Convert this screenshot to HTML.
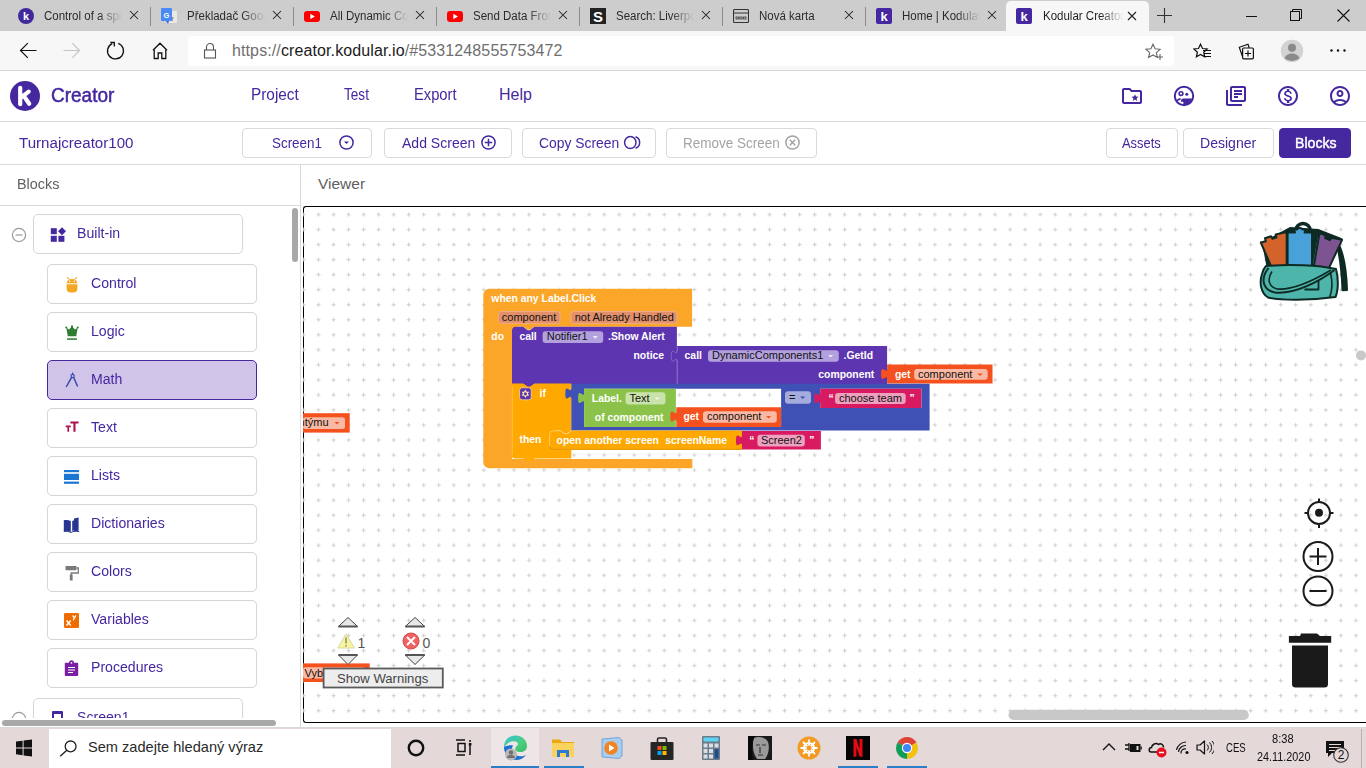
<!DOCTYPE html>
<html><head><meta charset="utf-8">
<style>
*{box-sizing:border-box;margin:0;padding:0}
html,body{width:1366px;height:768px;overflow:hidden;background:#fff;font-family:"Liberation Sans",sans-serif;position:relative}
.a{position:absolute}
#tabs{left:0;top:0;width:1366px;height:31px;background:#cdcdcd}
.tab{position:absolute;top:0;height:31px;width:143px}
.tab .sep{position:absolute;left:0;top:7px;width:1px;height:19px;background:#8c8c8c}
.tab .ic{position:absolute;left:11px;top:8px;width:16px;height:16px}
.tab .tx{position:absolute;left:37px;top:8px;width:78px;overflow:hidden;white-space:nowrap;font-size:12.5px;color:#2b2b2b;line-height:16px;
 -webkit-mask-image:linear-gradient(90deg,#000 70%,transparent 100%)}
.tab .tx span{display:inline-block;transform:scaleX(.92);transform-origin:0 0}
.tab .cl{position:absolute;left:121px;top:9px;width:12px;height:12px}
#active{left:1006px;top:1px;width:143px;height:31px;background:#f7f7f7;border-radius:5px 5px 0 0}
#addr{left:0;top:31px;width:1366px;height:40px;background:#f7f7f7;border-bottom:1px solid #d6d6d6}
#url{left:188px;top:36px;width:986px;height:30px;background:#fff;border-radius:4px}
#urltext{left:232px;top:42px;font-size:16px;letter-spacing:.11px;color:#6f6f6f;white-space:nowrap;line-height:18px}
#urltext b{font-weight:normal;color:#1b1b1b}
#hdr{left:0;top:71px;width:1366px;height:51px;background:#fff;border-bottom:1px solid #d9d9d9}
.purple{color:#4527a0}
#bar{left:0;top:122px;width:1366px;height:43px;border-bottom:1px solid #d9d9d9}
.btn{position:absolute;top:128px;height:30px;border:1px solid #dadada;border-radius:4px;background:#fff;color:#4527a0;font-size:15px;line-height:28px;white-space:nowrap}
.tb{top:134px;transform-origin:0 0;font-size:15px;line-height:17px;color:#4527a0;white-space:nowrap}
.ct{font-size:15.5px;line-height:18px;color:#4527a0;white-space:nowrap;transform:scaleX(.91);transform-origin:0 0}
.bw{font:bold 10.4px "Liberation Sans",sans-serif;fill:#fff}
.dk{font:11px "Liberation Sans",sans-serif;fill:#111}
.cat{position:absolute;left:47px;width:210px;height:40px;border:1px solid #d6d6d6;border-radius:4px;background:#fff;font-size:15px;color:#4527a0;line-height:38px}
.cat span{position:absolute;left:43px;top:0}
.cat svg{position:absolute;left:16px;top:12px}
</style></head><body>
<!-- TAB STRIP -->
<div id="tabs" class="a"></div>
<div class="tab" style="left:7px"><svg class="ic" viewBox="0 0 16 16"><circle cx="8" cy="8" r="8" fill="#3f2a9c"/><text x="8" y="12.2" font-size="11" font-weight="bold" fill="#fff" text-anchor="middle" font-family="Liberation Sans">k</text></svg><div class="tx"><span>Control of a spinner</span></div><svg class="cl" viewBox="0 0 12 12"><path d="M2 2l8 8M10 2l-8 8" stroke="#222" stroke-width="1.05"/></svg></div>
<div class="tab" style="left:150px"><div class="sep"></div><svg class="ic" viewBox="0 0 16 16"><rect x="5" y="3" width="11" height="12" rx="1" fill="#e8e8e8"/><path d="M10 7l1 2.2 2.3.2-1.7 1.5.5 2.3-2.1-1.2-2 1.2.5-2.3-1.8-1.5 2.3-.2z" fill="#8a8a8a"/><rect x="0" y="0" width="11" height="13" rx="1" fill="#4a8af4"/><path d="M5 13l2 3 1-3z" fill="#3367d6"/><text x="5.5" y="9.5" font-size="7.5" font-weight="bold" fill="#fff" text-anchor="middle" font-family="Liberation Sans">G</text></svg><div class="tx"><span>Překladač Google</span></div><svg class="cl" viewBox="0 0 12 12"><path d="M2 2l8 8M10 2l-8 8" stroke="#222" stroke-width="1.05"/></svg></div>
<div class="tab" style="left:293px"><div class="sep"></div><svg class="ic" viewBox="0 0 16 16"><rect x="0" y="3" width="16" height="11" rx="3" fill="#f00"/><path d="M6.3 5.8v5.4l4.6-2.7z" fill="#fff"/></svg><div class="tx"><span>All Dynamic Components</span></div><svg class="cl" viewBox="0 0 12 12"><path d="M2 2l8 8M10 2l-8 8" stroke="#222" stroke-width="1.05"/></svg></div>
<div class="tab" style="left:436px"><div class="sep"></div><svg class="ic" viewBox="0 0 16 16"><rect x="0" y="3" width="16" height="11" rx="3" fill="#f00"/><path d="M6.3 5.8v5.4l4.6-2.7z" fill="#fff"/></svg><div class="tx"><span>Send Data From</span></div><svg class="cl" viewBox="0 0 12 12"><path d="M2 2l8 8M10 2l-8 8" stroke="#222" stroke-width="1.05"/></svg></div>
<div class="tab" style="left:579px"><div class="sep"></div><svg class="ic" viewBox="0 0 16 16"><rect width="16" height="16" fill="#222"/><text x="8" y="14" font-size="15" font-weight="bold" fill="#fff" text-anchor="middle" font-family="Liberation Sans">S</text></svg><div class="tx"><span>Search: Liverpool</span></div><svg class="cl" viewBox="0 0 12 12"><path d="M2 2l8 8M10 2l-8 8" stroke="#222" stroke-width="1.05"/></svg></div>
<div class="tab" style="left:722px"><div class="sep"></div><svg class="ic" viewBox="0 0 16 16"><rect x="0.5" y="1.5" width="15" height="13" rx="1" fill="none" stroke="#333" stroke-width="1.1"/><line x1="0.5" y1="5" x2="15.5" y2="5" stroke="#333" stroke-width="1"/><rect x="3" y="9" width="2.4" height="2" fill="none" stroke="#333" stroke-width=".8"/><rect x="6.8" y="9" width="2.4" height="2" fill="none" stroke="#333" stroke-width=".8"/><rect x="10.6" y="9" width="2.4" height="2" fill="none" stroke="#333" stroke-width=".8"/></svg><div class="tx" style="-webkit-mask-image:none"><span>Nová karta</span></div><svg class="cl" viewBox="0 0 12 12"><path d="M2 2l8 8M10 2l-8 8" stroke="#222" stroke-width="1.05"/></svg></div>
<div class="tab" style="left:865px"><div class="sep"></div><svg class="ic" viewBox="0 0 16 16"><rect width="16" height="16" rx="2" fill="#4527a0"/><text x="8" y="13" font-size="13" font-weight="bold" fill="#fff" text-anchor="middle" font-family="Liberation Sans">k</text></svg><div class="tx"><span>Home | Kodular</span></div><svg class="cl" viewBox="0 0 12 12"><path d="M2 2l8 8M10 2l-8 8" stroke="#222" stroke-width="1.05"/></svg></div>
<div id="active" class="a"><svg style="position:absolute;left:10px;top:7px" width="16" height="16" viewBox="0 0 16 16"><rect width="16" height="16" rx="2" fill="#4527a0"/><text x="8" y="13" font-size="13" font-weight="bold" fill="#fff" text-anchor="middle" font-family="Liberation Sans">k</text></svg><div style="position:absolute;left:37px;top:7px;width:80px;overflow:hidden;white-space:nowrap;font-size:12.5px;color:#1e1e1e;line-height:16px;-webkit-mask-image:linear-gradient(90deg,#000 72%,transparent 100%)"><span style="display:inline-block;transform:scaleX(.92);transform-origin:0 0">Kodular Creator</span></div><svg style="position:absolute;left:120px;top:9px" width="12" height="12" viewBox="0 0 12 12"><path d="M2 2l8 8M10 2l-8 8" stroke="#222" stroke-width="1.1"/></svg></div>
<svg class="a" style="left:1157px;top:8px" width="15" height="15" viewBox="0 0 15 15"><path d="M7.5 0v15M0 7.5h15" stroke="#333" stroke-width="1.1"/></svg>
<svg class="a" style="left:1246px;top:10px" width="12" height="12" viewBox="0 0 12 12"><path d="M0 6.5h11" stroke="#111" stroke-width="1"/></svg>
<svg class="a" style="left:1290px;top:9px" width="13" height="13" viewBox="0 0 13 13"><rect x="0.5" y="2.5" width="9" height="9" fill="none" stroke="#111" stroke-width="1"/><path d="M2.5 2.5v-2h9v9h-2" fill="none" stroke="#111" stroke-width="1"/></svg>
<svg class="a" style="left:1337px;top:9px" width="13" height="13" viewBox="0 0 13 13"><path d="M0.5 0.5l12 12M12.5 0.5l-12 12" stroke="#111" stroke-width="1.1"/></svg>
<!-- ADDRESS BAR -->
<div id="addr" class="a"></div>
<div id="url" class="a"></div>
<svg class="a" style="left:19px;top:42px" width="18" height="17" viewBox="0 0 18 17"><path d="M1.5 8.5h16M8.8 1.2L1.5 8.5l7.3 7.3" fill="none" stroke="#111" stroke-width="1.2"/></svg>
<svg class="a" style="left:63px;top:42px" width="18" height="17" viewBox="0 0 18 17"><path d="M0.5 8.5h16M9.2 1.2l7.3 7.3-7.3 7.3" fill="none" stroke="#c4c4c4" stroke-width="1.2"/></svg>
<svg class="a" style="left:106px;top:41px" width="20" height="20" viewBox="0 0 20 20"><path d="M12.3 2.4A8 8 0 1 1 6.2 2.6" fill="none" stroke="#111" stroke-width="1.3"/><path d="M4.3 1.5h4v4" fill="none" stroke="#111" stroke-width="1.3"/></svg>
<svg class="a" style="left:152px;top:42px" width="16" height="18" viewBox="0 0 16 18"><path d="M1 8.2L8 1.2l7 7M2.2 7v9.5h4V11h3.6v5.5h4V7" fill="none" stroke="#111" stroke-width="1.3"/></svg>
<svg class="a" style="left:203px;top:42px" width="14" height="17" viewBox="0 0 14 17"><path d="M3.5 8V5a3.5 3.5 0 0 1 7 0v3" fill="none" stroke="#555" stroke-width="1.1"/><rect x="1.5" y="8" width="11" height="8" fill="none" stroke="#555" stroke-width="1.1"/></svg>
<svg class="a" style="left:1145px;top:43px" width="19" height="18" viewBox="0 0 19 18"><path d="M8 1.2l2.1 4.6 5 .5-3.8 3.3 1.1 4.9L8 12l-4.4 2.5 1.1-4.9L.9 6.3l5-.5z" fill="none" stroke="#666" stroke-width="1.1"/><path d="M15 11v6M12 14h6" stroke="#666" stroke-width="1.1"/></svg>
<svg class="a" style="left:1193px;top:43px" width="19" height="17" viewBox="0 0 19 17"><path d="M7.5 1.2l2 4.3 4.7.5-3.5 3.2 1 4.6-4.2-2.4-4.1 2.4 1-4.6L.9 6l4.6-.5z" fill="none" stroke="#111" stroke-width="1.2"/><path d="M10 7.5h8M11 10.5h7M11 13.5h7" stroke="#111" stroke-width="1.2"/></svg>
<svg class="a" style="left:1238px;top:43px" width="18" height="17" viewBox="0 0 18 17"><path d="M4.5 13.5L1.3 4.3l8.7-3 1.2 3.5" fill="none" stroke="#111" stroke-width="1.2"/><rect x="4.6" y="5" width="10.8" height="10.8" rx="1" fill="#f7f7f7" stroke="#111" stroke-width="1.2"/><path d="M10 7.5v6M7 10.5h6" stroke="#111" stroke-width="1.2"/></svg>
<svg class="a" style="left:1280px;top:39px" width="24" height="24" viewBox="0 0 24 24"><circle cx="12" cy="12" r="11.2" fill="#d2d2d2"/><circle cx="12" cy="8.8" r="4" fill="#8a8a8a"/><path d="M4.6 19.2c1.2-3 4-4.6 7.4-4.6s6.2 1.6 7.4 4.6A11 11 0 0 1 4.6 19.2z" fill="#8a8a8a"/></svg>
<svg class="a" style="left:1329px;top:48px" width="18" height="5" viewBox="0 0 18 5"><circle cx="2.5" cy="2.5" r="1.2" fill="#111"/><circle cx="9" cy="2.5" r="1.2" fill="#111"/><circle cx="15.5" cy="2.5" r="1.2" fill="#111"/></svg>
<div id="urltext" class="a">https://<b>creator.kodular.io</b>/#5331248555753472</div>

<!-- KODULAR HEADER -->
<div id="hdr" class="a"></div>
<svg class="a" style="left:10px;top:81px" width="30" height="30" viewBox="0 0 30 30"><circle cx="15" cy="15" r="15" fill="#4527a0"/><path d="M10.2 6.8v16.4M10.2 17.2l8.5-6.6M13.6 14.6l5.6 8.2" fill="none" stroke="#fff" stroke-width="4.2" stroke-linecap="round" stroke-linejoin="round"/></svg>
<div class="a purple" style="left:50.5px;top:84px;font-size:20px;font-weight:normal;-webkit-text-stroke:.5px #4527a0;line-height:22px;transform:scaleX(.95);transform-origin:0 0">Creator</div>
<div class="a purple" style="left:250.5px;top:86px;font-size:16px;line-height:18px;transform:scaleX(.96);transform-origin:0 0">Project</div>
<div class="a purple" style="left:344px;top:86px;font-size:16px;line-height:18px;transform:scaleX(.85);transform-origin:0 0">Test</div>
<div class="a purple" style="left:414px;top:86px;font-size:16px;line-height:18px;transform:scaleX(.92);transform-origin:0 0">Export</div>
<div class="a purple" style="left:499px;top:86px;font-size:16px;line-height:18px">Help</div>
<svg class="a" style="left:1120px;top:84px" width="24" height="24" viewBox="0 0 24 24"><path fill="#4527a0" d="M20 6h-8l-2-2H4c-1.1 0-2 .9-2 2v12c0 1.1.9 2 2 2h16c1.1 0 2-.9 2-2V8c0-1.1-.9-2-2-2zm0 12H4V6h5.2l2 2H20v10z"/><path fill="#4527a0" d="M15 10.2l1 2.3 2.5.2-1.9 1.7.6 2.5-2.2-1.3-2.2 1.3.6-2.5-1.9-1.7 2.5-.2z"/></svg>
<svg class="a" style="left:1172px;top:84px" width="24" height="24" viewBox="0 0 24 24"><circle cx="12" cy="12" r="9.2" fill="none" stroke="#4527a0" stroke-width="2"/><circle cx="9" cy="9.6" r="1.9" fill="none" stroke="#4527a0" stroke-width="1.6"/><circle cx="14.8" cy="10.2" r="1.5" fill="#4527a0"/><path fill="#4527a0" d="M11.5 14.5h8.5a9 9 0 0 1-7.5 6.7c-.8-.1-1.3-.6-1.3-1.3 0-.5.3-.8.3-1.3 0-.4-.5-.8-1-.8h-1.6a3 3 0 0 1 2.6-3.3z"/><path d="M5 16.5c1.2-.8 2.2-1.5 3.6-1.6" fill="none" stroke="#4527a0" stroke-width="1.6"/></svg>
<svg class="a" style="left:1224px;top:84px" width="24" height="24" viewBox="0 0 24 24"><path fill="#4527a0" d="M4 6H2v14c0 1.1.9 2 2 2h14v-2H4V6zm16-4H8c-1.1 0-2 .9-2 2v12c0 1.1.9 2 2 2h12c1.1 0 2-.9 2-2V4c0-1.1-.9-2-2-2zm0 14H8V4h12v12zM10 9h8v2h-8zm0 3h4v2h-4zm0-6h8v2h-8z"/></svg>
<svg class="a" style="left:1276px;top:84px" width="24" height="24" viewBox="0 0 24 24"><path fill="#4527a0" d="M12 2C6.48 2 2 6.48 2 12s4.48 10 10 10 10-4.48 10-10S17.52 2 12 2zm0 18c-4.41 0-8-3.59-8-8s3.59-8 8-8 8 3.59 8 8-3.59 8-8 8zm.31-8.86c-1.77-.45-2.34-.94-2.34-1.67 0-.84.79-1.43 2.1-1.430 1.38 0 1.9.66 1.94 1.64h1.71c-.05-1.34-.87-2.57-2.49-2.97V5H10.9v1.69c-1.51.32-2.72 1.3-2.72 2.81 0 1.79 1.490 2.69 3.66 3.21 1.95.46 2.34 1.15 2.34 1.87 0 .53-.39 1.39-2.1 1.39-1.6 0-2.23-.72-2.32-1.64H8.04c.1 1.71 1.36 2.66 2.86 2.97V19h2.34v-1.67c1.52-.29 2.72-1.16 2.73-2.77-.01-2.2-1.9-2.96-3.66-3.42z"/></svg>
<svg class="a" style="left:1328px;top:84px" width="24" height="24" viewBox="0 0 24 24"><path fill="#4527a0" d="M12 2C6.48 2 2 6.48 2 12s4.48 10 10 10 10-4.48 10-10S17.52 2 12 2zM7.35 18.5C8.660 17.56 10.26 17 12 17s3.34.56 4.65 1.5c-1.31.94-2.91 1.5-4.65 1.5s-3.34-.56-4.65-1.5zm10.79-1.38C16.45 15.8 14.32 15 12 15s-4.45.8-6.14 2.12C4.7 15.73 4 13.95 4 12c0-4.42 3.58-8 8-8s8 3.58 8 8c0 1.95-.7 3.73-1.86 5.12zM12 6c-1.93 0-3.5 1.57-3.5 3.5S10.07 13 12 13s3.5-1.57 3.5-3.5S13.93 6 12 6zm0 5c-.83 0-1.5-.67-1.5-1.5S11.17 8 12 8s1.5.67 1.5 1.5S12.83 11 12 11z"/></svg>

<!-- TOOLBAR -->
<div id="bar" class="a"></div>
<div class="a purple" style="left:19px;top:134px;font-size:15.5px;line-height:18px;transform:scaleX(.975);transform-origin:0 0">Turnajcreator100</div>
<div class="btn" style="left:242px;width:130px"></div>
<div class="btn" style="left:384px;width:128px"></div>
<div class="btn" style="left:522px;width:134px"></div>
<div class="btn" style="left:666px;width:151px"></div>
<div class="btn" style="left:1106px;width:72px"></div>
<div class="btn" style="left:1183px;width:91px"></div>
<div class="btn" style="left:1279px;width:72px;background:#4527a0;border-color:#4527a0"></div>
<div class="a tb" style="left:271.9px;transform:scaleX(0.894)">Screen1</div>
<svg class="a" style="left:338px;top:134px" width="17" height="17" viewBox="0 0 17 17"><circle cx="8.5" cy="8.5" r="6.6" fill="none" stroke="#4527a0" stroke-width="1.5"/><path d="M6 7.6l2.5 2.5 2.5-2.5z" fill="#4527a0"/></svg>
<div class="a tb" style="left:401.5px;transform:scaleX(0.935)">Add Screen</div>
<svg class="a" style="left:480px;top:134px" width="17" height="17" viewBox="0 0 17 17"><circle cx="8.5" cy="8.5" r="6.6" fill="none" stroke="#4527a0" stroke-width="1.5"/><path d="M8.5 4.8v7.4M4.8 8.5h7.4" stroke="#4527a0" stroke-width="1.5"/></svg>
<div class="a tb" style="left:539.3px;transform:scaleX(0.925)">Copy Screen</div>
<svg class="a" style="left:623px;top:134px" width="19" height="17" viewBox="0 0 19 17"><ellipse cx="7.3" cy="8.5" rx="5.7" ry="6" fill="none" stroke="#4527a0" stroke-width="1.5"/><path d="M12.5 2.8a6 6 0 0 1 0 11.4" fill="none" stroke="#4527a0" stroke-width="1.5"/></svg>
<div class="a tb" style="left:683.1px;color:#a3a3a3;transform:scaleX(0.899)">Remove Screen</div>
<svg class="a" style="left:784px;top:134px" width="17" height="17" viewBox="0 0 17 17"><circle cx="8.5" cy="8.5" r="6.6" fill="none" stroke="#a3a3a3" stroke-width="1.5"/><path d="M5.8 5.8l5.4 5.4M11.2 5.8l-5.4 5.4" stroke="#a3a3a3" stroke-width="1.5"/></svg>
<div class="a tb" style="left:1121.8px;transform:scaleX(0.862)">Assets</div>
<div class="a tb" style="left:1200.0px;transform:scaleX(0.937)">Designer</div>
<div class="a tb" style="left:1295.2px;color:#fff;-webkit-text-stroke:.45px #fff;transform:scaleX(0.94)">Blocks</div>

<!-- PANEL HEADINGS -->
<div class="a" style="left:0;top:205px;width:300px;height:1px;background:#d9d9d9"></div>
<div class="a" style="left:300px;top:165px;width:1px;height:563px;background:#d9d9d9"></div>
<div class="a" style="left:16.5px;top:175px;font-size:15.5px;color:#606060;line-height:18px;transform:scaleX(.93);transform-origin:0 0">Blocks</div>
<div class="a" style="left:318px;top:175px;font-size:15.5px;color:#606060;line-height:18px">Viewer</div>

<svg class="a" style="left:11px;top:227px" width="16" height="16" viewBox="0 0 16 16"><circle cx="8" cy="8" r="6.6" fill="none" stroke="#9a9a9a" stroke-width="1.2"/><path d="M4.6 8h6.8" stroke="#9a9a9a" stroke-width="1.2"/></svg>
<div class="a" style="left:33px;top:214px;width:210px;height:40px;border:1px solid #d6d6d6;border-radius:5px"></div>
<svg class="a" style="left:50px;top:227px" width="16" height="16" viewBox="0 0 16 16"><rect x=".8" y="1.2" width="6" height="6" fill="#4527a0"/><path d="M12 .3l4 4-4 4-4-4z" fill="#4527a0"/><rect x=".8" y="8.8" width="6" height="6" fill="#4527a0"/><rect x="8.4" y="8.8" width="6" height="6" fill="#4527a0"/></svg>
<div class="a ct" style="left:77px;top:224px">Built-in</div>
<div class="a" style="left:47px;top:264px;width:210px;height:40px;border:1px solid #d6d6d6;border-radius:5px"></div>
<svg class="a" style="left:64px;top:276px" width="16" height="17" viewBox="0 0 16 17"><path d="M3.2 1.2l2 2.3M12.8 1.2l-2 2.3" stroke="#f5a623" stroke-width="1.1"/><path d="M2.6 7.2a5.4 4.2 0 0 1 10.8 0z" fill="#f5a623"/><path d="M2.6 8.3h10.8v4.2a4 4 0 0 1-4 4h-2.8a4 4 0 0 1-4-4z" fill="#f5a623"/><circle cx="5.6" cy="5.2" r=".8" fill="#fff"/><circle cx="10.4" cy="5.2" r=".8" fill="#fff"/></svg>
<div class="a ct" style="left:91px;top:274px">Control</div>
<div class="a" style="left:47px;top:312px;width:210px;height:40px;border:1px solid #d6d6d6;border-radius:5px"></div>
<svg class="a" style="left:64px;top:325px" width="16" height="16" viewBox="0 0 16 16"><path d="M2.3,2.6 L5,4.6 8,1.2 11,4.6 13.7,2.6 12.2,11.2 H3.8 Z" fill="#2e7d32"/><circle cx="2.3" cy="2.4" r="1" fill="#2e7d32"/><circle cx="8" cy="1.2" r="1" fill="#2e7d32"/><circle cx="13.7" cy="2.4" r="1" fill="#2e7d32"/><rect x="3" y="13.3" width="10" height="1.5" fill="#2e7d32"/></svg>
<div class="a ct" style="left:91px;top:322px">Logic</div>
<div class="a" style="left:47px;top:360px;width:210px;height:40px;border:1px solid #4527a0;border-radius:5px;background:#d1c4e9"></div>
<svg class="a" style="left:64px;top:372px" width="16" height="16" viewBox="0 0 16 16"><path d="M8.6,0.5 v2" stroke="#3949ab" stroke-width="1.2"/><circle cx="8.6" cy="4" r="1.6" fill="none" stroke="#3949ab" stroke-width="1.2"/><path d="M7.6,5.3 L2.2,15 M9.6,5.3 L13.6,14.5" stroke="#3949ab" stroke-width="1.5"/></svg>
<div class="a ct" style="left:91px;top:370px">Math</div>
<div class="a" style="left:47px;top:408px;width:210px;height:40px;border:1px solid #d6d6d6;border-radius:5px"></div>
<svg class="a" style="left:65px;top:420px" width="14" height="13" viewBox="0 0 17 15"><path d="M6.5,1.5 h10 v2.5 h-3.7 V14 H10.2 V4 H6.5 z" fill="#b0104f"/><path d="M.8,6.2 h6.2 v2.2 H5 V14 H2.9 V8.4 H.8 z" fill="#b0104f"/></svg>
<div class="a ct" style="left:91px;top:418px">Text</div>
<div class="a" style="left:47px;top:456px;width:210px;height:40px;border:1px solid #d6d6d6;border-radius:5px"></div>
<svg class="a" style="left:63px;top:469px" width="17" height="16" viewBox="0 0 17 16"><rect x="1" y="1" width="15" height="2.2" fill="#1976d2"/><rect x="1" y="4.8" width="15" height="6.2" fill="#1976d2"/><rect x="1" y="12.6" width="15" height="2.2" fill="#1976d2"/></svg>
<div class="a ct" style="left:91px;top:466px">Lists</div>
<div class="a" style="left:47px;top:504px;width:210px;height:40px;border:1px solid #d6d6d6;border-radius:5px"></div>
<svg class="a" style="left:63px;top:517px" width="17" height="16" viewBox="0 0 17 16"><path d="M.8 3.2c2.3-.6 4.8-.4 7 .9V15c-2.2-1.1-4.7-1.3-7-.8z" fill="#283593"/><path d="M9.2 4.1c1.2-.8 2.6-1.2 4-1.3V13c-1.4.1-2.8.5-4 1.2z" fill="#283593"/><path d="M11 1.5l4.6-1v13.2l-4.6.8z" fill="#283593"/><path d="M0.8 14.6c2.3-.5 4.8-.3 7 .9 2.2-1.2 4.8-1.5 8.4-.8" fill="none" stroke="#283593" stroke-width="1"/></svg>
<div class="a ct" style="left:91px;top:514px">Dictionaries</div>
<div class="a" style="left:47px;top:552px;width:210px;height:40px;border:1px solid #d6d6d6;border-radius:5px"></div>
<svg class="a" style="left:63px;top:565px" width="17" height="16" viewBox="0 0 17 16"><rect x="2.5" y="1" width="11" height="4.2" rx=".6" fill="#7a7a7a"/><path d="M13.5 3h1.8v5H8.2v2" fill="none" stroke="#7a7a7a" stroke-width="1.3"/><rect x="6.8" y="9.5" width="2.8" height="6" fill="#7a7a7a"/></svg>
<div class="a ct" style="left:91px;top:562px">Colors</div>
<div class="a" style="left:47px;top:600px;width:210px;height:40px;border:1px solid #d6d6d6;border-radius:5px"></div>
<svg class="a" style="left:64px;top:613px" width="15" height="15" viewBox="0 0 15 15"><rect width="15" height="15" rx="1.2" fill="#ef6c00"/><path d="M2.5 7.5l4.2 5M6.7 7.5l-4.2 5" stroke="#fff" stroke-width="1.5"/><path d="M8.6 2.4l1.6 2.4M11.8 2.4l-2.6 4.8" stroke="#fff" stroke-width="1.2"/></svg>
<div class="a ct" style="left:91px;top:610px">Variables</div>
<div class="a" style="left:47px;top:648px;width:210px;height:40px;border:1px solid #d6d6d6;border-radius:5px"></div>
<svg class="a" style="left:64px;top:660px" width="15" height="17" viewBox="0 0 15 17"><path d="M1.8 2.8h3.2a2.5 2.5 0 0 1 5 0h3.2c.6 0 1 .4 1 1V15c0 .6-.4 1-1 1H1.8c-.6 0-1-.4-1-1V3.8c0-.6.4-1 1-1z" fill="#7b1fa2"/><circle cx="7.5" cy="2.8" r=".9" fill="#fff"/><path d="M4 7.5h7M4 10h7M4 12.5h5" stroke="#fff" stroke-width="1.2"/></svg>
<div class="a ct" style="left:91px;top:658px">Procedures</div>
<div class="a" style="left:0;top:690px;width:300px;height:28px;overflow:hidden"><div class="a" style="left:33px;top:8px;width:210px;height:40px;border:1px solid #d6d6d6;border-radius:5px"></div><svg class="a" style="left:11px;top:21px" width="16" height="16" viewBox="0 0 16 16"><circle cx="8" cy="8" r="6.6" fill="none" stroke="#9a9a9a" stroke-width="1.2"/></svg><div class="a" style="left:52px;top:21px;width:11px;height:16px;border:2px solid #4527a0;border-top-width:3px;border-radius:1px"></div><div class="a ct" style="left:77px;top:18px">Screen1</div></div>
<div class="a" style="left:2px;top:720px;width:274px;height:6px;border-radius:3px;background:#a8a8a8"></div>
<div class="a" style="left:292px;top:208px;width:6px;height:54px;border-radius:3px;background:#a8a8a8"></div>

<!-- VIEWER -->
<div class="a" style="left:303px;top:206px;width:1063px;height:517px;border-top:1px solid #000;border-left:1px solid #000;border-bottom:1.4px solid #000;border-radius:3px 0 0 3px"></div>
<svg class="a" style="left:303px;top:206px" width="1063" height="517" viewBox="303 206 1063 517">
<defs><pattern id="grid" patternUnits="userSpaceOnUse" width="15.035" height="15.035" x="316" y="212"><path d="M0.5,2.5 H4.5 M2.5,0.5 V4.5" stroke="#ccc" stroke-width="1" fill="none"/></pattern></defs>
<rect x="303" y="206" width="1063" height="517" fill="url(#grid)"/>
<path d="M483.3,294.7 a6,6 0 0 1 6,-6 H692.1 V326.8 H534.5 l-4.5,3 h-2.25 l-4.5,-3 H512 V459.1 H692.3 V468.2 H489.3 a6,6 0 0 1 -6,-6 Z" fill="#fba628"/>
<rect x="511" y="326" width="6" height="5" fill="#fba628"/>
<path d="M512,330.8 a4,4 0 0 1 4,-4 H523.2 l4.5,3.5 h2.25 l4.5,-3.5 H676.9 V384 H534.5 l-4.5,3 h-2.25 l-4.5,-3 H512 Z" fill="#5e35b1"/>
<path d="M511.8,383.4 H523.2 l4.5,3 h2.25 l4.5,-3 H571.3 V430.5 H571.3 l-4.5,3 h-2.25 l-4.5,-3 H549.1 V449.7 H571.3 V458.5 H534.5 l-4.5,3 h-2.25 l-4.5,-3 H515.1 a3.3,3.3 0 0 1 -3.3,-3.3 Z" fill="#ffa900"/>
<path d="M512.3,386 V455" stroke="rgba(255,230,180,.55)" stroke-width=".7"/>
<path d="M534.5,383.3 l-4.5,3 h-2.25 l-4.5,-3 Z" fill="#5e35b1"/>
<path d="M677,346 H887.1 V384 H677 V361 c0,-7.5 -6,6 -6,-5.625 s6,1.875 6,-5.625 Z" fill="#5e35b1"/>
<path d="M677.5,346.5 V351 c0,0 0,0 0,0 M677.5,361 V384" stroke="rgba(255,255,255,.22)" stroke-width="1"/>
<path d="M677.2,350.5 c0,7.5 -6,-6 -6,5.625 s6,-1.875 6,5.625" stroke="rgba(255,255,255,.22)" stroke-width="1" fill="none"/>
<path d="M887.1,364.6 H992.5 V383.6 H887.1 V379.60 c0,-7.5 -6,6 -6,-5.625 s6,1.875 6,-5.625 Z" fill="#f4511e"/>
<path fill-rule="evenodd" d="M571.3,383.8 H929.6 V430.6 H571.3 V399.1 c0,-7.5 -6,6 -6,-5.625 s6,1.875 6,-5.625 Z M584.1,388.7 H781.1 V427.1 H584.1 Z M820.2,388.8 H921.5 V408.1 H820.2 Z" fill="#3f51b5"/>
<path d="M584.1,388.7 H675.9 V427.1 H584.1 V403.7 c0,-7.5 -6,6 -6,-5.625 s6,1.875 6,-5.625 Z" fill="#8bc34a"/>
<path d="M676.3,407.2 H781.1 V426.9 H676.3 V422.20 c0,-7.5 -6,6 -6,-5.625 s6,1.875 6,-5.625 Z" fill="#f4511e"/>
<path d="M820.2,388.8 H921.5 V408.1 H820.2 V403.80 c0,-7.5 -6,6 -6,-5.625 s6,1.875 6,-5.625 Z" fill="#d81b60"/>
<rect x="548.5" y="430" width="8" height="20" fill="#ffa900"/>
<path d="M549.1,434.4 a4,4 0 0 1 4,-4 H560.3 l4.5,3 h2.25 l4.5,-3 H742 V449.7 H553.1 a4,4 0 0 1 -4,-4 Z" fill="#ffa900"/>
<path d="M549.6,446 V434.4 a3.6,3.6 0 0 1 3.6,-3.6 H560.3 l4.5,3 h2.25 l4.5,-3" fill="none" stroke="rgba(255,255,255,.45)" stroke-width=".8"/>
<path d="M549.6,446 a3.6,3.6 0 0 0 3.6,3.4 H742" fill="none" stroke="#d98f00" stroke-width=".8"/>
<path d="M742,431 H820.9 V449.6 H742 V446.00 c0,-7.5 -6,6 -6,-5.625 s6,1.875 6,-5.625 Z" fill="#d81b60"/>
<rect x="303" y="413.2" width="46.7" height="19.4" fill="#f4511e"/>
<rect x="303" y="417.3" width="42" height="11.6" rx="2.5" fill="#f9b9a4"/>
<rect x="303" y="663.4" width="66.7" height="18.6" fill="#f4511e"/>
<rect x="303" y="667.2" width="62" height="11.4" rx="2.5" fill="#f9b9a4"/>
<rect x="498.4" y="311.5" width="61.60" height="11.90" rx="3" fill="#e2906b" stroke="#eeac86" stroke-width="1"/>
<rect x="571" y="311.5" width="106.00" height="11.90" rx="3" fill="#e2906b" stroke="#eeac86" stroke-width="1"/>
<rect x="542.6" y="331.2" width="60.60" height="11.70" rx="3" fill="#b3a1dd"/>
<rect x="708" y="350.3" width="130.80" height="11.40" rx="3" fill="#b3a1dd"/>
<rect x="914.2" y="369" width="73.50" height="10.80" rx="3" fill="#f9b9a4"/>
<rect x="625.6" y="392.3" width="39.80" height="12.30" rx="3" fill="#c9e3ab"/>
<rect x="703" y="411.3" width="73.80" height="11.50" rx="3" fill="#f9b9a4"/>
<rect x="785" y="391.2" width="26.00" height="12.60" rx="3" fill="#a5acdb"/>
<rect x="835.1" y="393" width="70.60" height="11.10" rx="3" fill="#eda1bf"/>
<rect x="757.4" y="434.8" width="47.40" height="11.60" rx="3" fill="#eda1bf"/>
<text x="491.3" y="301.8" class="bw">when any Label.Click</text>
<text x="501.8" y="320.7" class="dk">component</text>
<text x="574.7" y="320.7" class="dk">not Already Handled</text>
<text x="491.3" y="339.9" class="bw">do</text>
<text x="519.4" y="339.9" class="bw">call</text>
<text x="546.7" y="339.9" class="dk">Notifier1</text>
<text x="608" y="339.8" class="bw">.Show Alert</text>
<text x="633.5" y="358.6" class="bw">notice</text>
<text x="684.6" y="358.7" class="bw">call</text>
<text x="712" y="358.7" class="dk">DynamicComponents1</text>
<text x="843.6" y="358.7" class="bw">.GetId</text>
<text x="818.3" y="377.8" class="bw">component</text>
<text x="894.9" y="377.8" class="bw">get</text>
<text x="918" y="377.8" class="dk">component</text>
<text x="539.5" y="396.7" class="bw">if</text>
<text x="591.8" y="401.7" class="bw">Label.</text>
<text x="629.5" y="401.7" class="dk">Text</text>
<text x="594.8" y="420.5" class="bw">of component</text>
<text x="683.4" y="420.2" class="bw">get</text>
<text x="707" y="420.2" class="dk">component</text>
<text x="789" y="401.3" class="dk">=</text>
<text x="828.5" y="401.5" class="bw">“</text>
<text x="839" y="401.5" class="dk">choose team</text>
<text x="909.5" y="401.5" class="bw">”</text>
<text x="519.5" y="442.6" class="bw">then</text>
<text x="556.6" y="443.6" class="bw">open another screen</text>
<text x="665.3" y="443.6" class="bw">screenName</text>
<text x="749.2" y="444.4" class="bw">“</text>
<text x="761" y="444.4" class="dk">Screen2</text>
<text x="809.2" y="444.4" class="bw">”</text>
<text x="328.6" y="426.2" class="dk" text-anchor="end">vybrat tým pro antýmu</text>
<text x="304.5" y="677" class="dk">Vyber</text>
<path d="M592.6999999999999,336.09999999999997 h5.2 l-2.6,2.6 z" fill="#ede7f6"/>
<path d="M828.1,355.0 h5.2 l-2.6,2.6 z" fill="#ede7f6"/>
<path d="M977.4,373.4 h5.2 l-2.6,2.6 z" fill="#f4511e"/>
<path d="M654.6999999999999,397.5 h5.2 l-2.6,2.6 z" fill="#eef7e4"/>
<path d="M766.0,416.0 h5.2 l-2.6,2.6 z" fill="#f4511e"/>
<path d="M800.1,396.5 h5.2 l-2.6,2.6 z" fill="#3f51b5"/>
<path d="M334.29999999999995,422.0 h5.2 l-2.6,2.6 z" fill="#f4511e"/>
<rect x="519.6" y="387.8" width="11.6" height="12" rx="2.5" fill="#5e35b1" stroke="#fff3c4" stroke-width=".6"/>
<g transform="translate(525.4,393.8)"><path d="M0,-4.2 L1.3,-2 3.7,-2 2.5,0 3.7,2 1.3,2 0,4.2 -1.3,2 -3.7,2 -2.5,0 -3.7,-2 -1.3,-2 Z" fill="#ffe9a6"/><circle r="1.6" fill="#5e35b1"/></g>
<g stroke="#0e2a24" stroke-width="2" stroke-linejoin="round">
<path d="M1295.5,231 a7.5,7.5 0 0 1 15,0" fill="none" stroke-width="3.4"/>
<path d="M1263,243 L1290,228 1318,230 1341,239 1327,269 1268,269 Z" fill="#0e2a24"/><path d="M1312.5,266 L1318,236 1322,236 1316,266 Z" fill="#2e8f80" stroke="none"/>
<path d="M1260.8,242.5 l5,-1.3 -0.8,-3 6,-2 1.5,2.6 4,-1.4 -0.8,-3 11,-2.5 V266 H1271 Z" fill="#d3622b"/>
<path d="M1287.6,232.6 h7.4 l-1,-3 h3 a3.2,3.2 0 0 1 5.6,0 h3 l-1,3 h7.4 V266 H1287.6 Z" fill="#48a2d9"/>
<path d="M1319.5,233 l6.5,2.6 -1,2.4 4.8,2 1.8,-2.2 l10.5,2 -14,30 -14.2,-3.8 Z" fill="#7d5491"/>
<path d="M1340,247 c4,10 6.5,27 7,43 l-4.5,0.2 c-0.5,-15 -2,-29 -4.5,-41 Z" fill="#0e2a24"/>
<path d="M1266,266 C1290,264 1318,265 1336,269 C1338.5,278 1338.5,290 1335.5,297 C1310,300.5 1280,300.5 1268,297.5 C1261,293 1259,283 1262,274 C1263,270 1264,268 1266,266 Z" fill="#4db5aa"/>
<path d="M1268.5,268 C1260.5,278 1262,290 1275,292.5 C1295,294.5 1320,281 1334.5,270" fill="none"/>
<path d="M1272,271.5 C1267,279 1268.5,287 1277,289 C1295,290.5 1316,279 1331,270" fill="none" stroke-width="1.6"/>
<path d="M1318.5,281 v8.5 h-14" fill="none" stroke-width="1.8"/>
<path d="M1330.5,273 C1332.5,281 1332.5,290 1329.5,297.5" fill="none" stroke-width="1.6"/>
</g>
<g fill="none" stroke="#1a1a1a" stroke-width="2"><circle cx="1319" cy="513" r="11"/><path d="M1319,498.5 v4 M1319,523.5 v4.5 M1304.5,513 h4 M1329.5,513 h4"/></g><circle cx="1319" cy="512.8" r="4" fill="#1a1a1a"/>
<g fill="none" stroke="#1a1a1a" stroke-width="2"><circle cx="1318" cy="556.5" r="14.5"/><path d="M1318,548 v17 M1309.5,556.5 h17"/><circle cx="1318" cy="591" r="14.5"/><path d="M1309.5,591 h17"/></g>
<path d="M1301,633.5 h16 l3,2.5 h11.2 v6.8 h-42.3 v-6.8 h11.2 z" fill="#1a1a1a"/><path d="M1292,645.5 h36 v38.5 a3.5,3.5 0 0 1 -3.5,3.5 h-29 a3.5,3.5 0 0 1 -3.5,-3.5 z" fill="#1a1a1a"/>
<circle cx="1361" cy="355.4" r="5" fill="#c8c8c8"/>
<rect x="1008.5" y="709.8" width="240.3" height="10.2" rx="5.1" fill="#c8c8c8"/>
<g stroke="#444" stroke-width="1" fill="#e8e8e8" stroke-linejoin="round"><path d="M338.5,626.5 L348,617.5 357.5,626.5 Z"/><path d="M338.5,655 L357.5,655 348,664.5 Z"/><path d="M405.3,626.5 L415,617.5 424.7,626.5 Z"/><path d="M405.3,655 L424.7,655 415,664.5 Z"/></g><g stroke="#555" stroke-width="1.8"><path d="M338.5,626.5 H357.5 M338.5,655 H357.5 M405.3,626.5 H424.7 M405.3,655 H424.7"/></g>
<path d="M346,634 L354.5,648 H337.8 Z" fill="#f8f59c" stroke="#d8d8a0" stroke-width="1" stroke-linejoin="round"/><path d="M346,637.5 v6 M346,645 v1.5" stroke="#777" stroke-width="1.3"/>
<text x="357.6" y="648" style="font:14px 'Liberation Sans',sans-serif;fill:#555">1</text>
<circle cx="411" cy="641" r="8" fill="#f06262" stroke="#d04a4a" stroke-width="1"/><path d="M407,637 l8,8 M415,637 l-8,8" stroke="#fff" stroke-width="2"/>
<text x="422.6" y="648" style="font:14px 'Liberation Sans',sans-serif;fill:#555">0</text>
<rect x="323.6" y="668.5" width="119.2" height="19" fill="#ededed" stroke="#5a5a5a" stroke-width="1.8"/>
<text x="337" y="682.6" style="font:13.1px 'Liberation Sans',sans-serif;fill:#444">Show Warnings</text>
</svg>

<!-- TASKBAR -->
<div class="a" style="left:0;top:727px;width:1366px;height:1px;background:#d8d8d8"></div>
<div class="a" style="left:0;top:728px;width:1366px;height:40px;background:#e4d8d8"></div>
<svg class="a" style="left:15px;top:739px" width="18" height="18" viewBox="0 0 18 18"><path d="M1,2.6 L7.6,1.7 V8.4 H1 Z M8.6,1.5 L17,0.4 V8.4 H8.6 Z M1,9.4 H7.6 V16.2 L1,15.3 Z M8.6,9.4 H17 V17.5 L8.6,16.4 Z" fill="#111"/></svg>
<div class="a" style="left:49px;top:729px;width:342px;height:39px;background:#fff"></div>
<svg class="a" style="left:59px;top:740px" width="19" height="17" viewBox="0 0 19 17"><circle cx="11.6" cy="6.4" r="5.4" fill="none" stroke="#222" stroke-width="1.3"/><path d="M7.8,10.2 L1.2,16.3" stroke="#222" stroke-width="1.4"/></svg>
<div class="a" style="left:88px;top:739px;font-size:14.6px;line-height:17px;color:#2a2a2a;white-space:nowrap">Sem zadejte hledaný výraz</div>
<svg class="a" style="left:406px;top:738px" width="20" height="20" viewBox="0 0 20 20"><circle cx="10" cy="10" r="7.2" fill="none" stroke="#111" stroke-width="2.4"/></svg>
<svg class="a" style="left:455px;top:739px" width="18" height="17" viewBox="0 0 18 17"><path d="M1,1 H10 M1,16 H10 M3,4.5 H10 V12.5 H3 Z M15,1 V3 M15,6 V16" fill="none" stroke="#111" stroke-width="1.5"/><rect x="13.8" y="4" width="2.6" height="2.6" fill="#111"/></svg>
<div class="a" style="left:491px;top:728px;width:48px;height:40px;background:#eee6e6"></div>
<div class="a" style="left:491px;top:766px;width:48px;height:2px;background:#2c7fc7"></div>
<svg class="a" style="left:502px;top:735px" width="26" height="26" viewBox="0 0 26 26"><defs><linearGradient id="eg" x1="0" y1="0" x2="1" y2="1"><stop offset="0" stop-color="#36c0e0"/><stop offset=".6" stop-color="#4bd07a"/><stop offset="1" stop-color="#39b86a"/></linearGradient></defs><path d="M2,12 C2,5 7,0.5 13.5,0.5 C20,0.5 25,5 25,11 C25,15 22,17 18,17 C14,17 12.5,15 13.5,12.5 C14,11 16,10.5 16,9 C16,6.5 11,5 7,7.5 C4,9.5 2.5,12 2,12 Z" fill="url(#eg)"/><path d="M2,12 C2,19 7.5,25 14,25 C18,25 22,23 24,20 C21,21.5 17,21.8 14,20 C10,18 9,14 11,10.5 C7,10 3,11 2,12 Z" fill="#1e6fd0"/><circle cx="9" cy="19.5" r="6" fill="#b9b9b9"/><circle cx="9" cy="17.5" r="2.2" fill="#6f6f6f"/><path d="M5,23 a4,3 0 0 1 8,0 z" fill="#6f6f6f"/></svg>
<div class="a" style="left:544px;top:766px;width:40px;height:2px;background:#2c7fc7"></div>
<svg class="a" style="left:552px;top:738px" width="22" height="20" viewBox="0 0 22 20"><path d="M0,1.5 H8 L10,4 H22 V19 H0 Z" fill="#e8a90f"/><rect x="0" y="5" width="22" height="14" fill="#fcd25e"/><path d="M5,19 V12 H17 V19 H14 V15 H8 V19 Z" fill="#2a7bd4"/></svg>
<svg class="a" style="left:601px;top:737px" width="22" height="22" viewBox="0 0 22 22"><path d="M1,2 L18,0.5 21,3 V19 L18,21.5 1,20 Z" fill="#a8cdee" stroke="#5c9bd6" stroke-width=".8"/><circle cx="10" cy="11" r="6.8" fill="#f28322"/><path d="M8,7.5 L13.5,11 8,14.5 Z" fill="#fff"/></svg>
<svg class="a" style="left:650px;top:736px" width="24" height="24" viewBox="0 0 24 24"><path d="M7.5,6 V3.5 a1.5,1.5 0 0 1 1.5,-1.5 h6 a1.5,1.5 0 0 1 1.5,1.5 V6" fill="none" stroke="#222" stroke-width="1.6"/><rect x="0.5" y="6" width="23" height="18" rx="1" fill="#252525"/><rect x="7.5" y="10" width="4" height="4" fill="#f25022"/><rect x="12.5" y="10" width="4" height="4" fill="#7fba00"/><rect x="7.5" y="15" width="4" height="4" fill="#00a4ef"/><rect x="12.5" y="15" width="4" height="4" fill="#ffb900"/></svg>
<svg class="a" style="left:702px;top:736px" width="18" height="24" viewBox="0 0 18 24"><rect x="0" y="0" width="18" height="24" rx="1" fill="#6d7b88"/><rect x="1.5" y="1.5" width="15" height="4" fill="#5fd3f3"/><g fill="#d9dfe5"><rect x="1.5" y="7.5" width="4" height="4"/><rect x="7" y="7.5" width="4" height="4"/><rect x="12.5" y="7.5" width="4" height="4"/><rect x="1.5" y="13" width="4" height="4"/><rect x="7" y="13" width="4" height="4"/><rect x="1.5" y="18.5" width="4" height="4"/><rect x="7" y="18.5" width="4" height="4"/></g><rect x="12.5" y="13" width="4" height="9.5" fill="#1f4e8c"/></svg>
<svg class="a" style="left:748px;top:736px" width="24" height="24" viewBox="0 0 24 24"><rect width="24" height="24" fill="#1a1a1a"/><path d="M6,2 C10,0 18,1 20,6 C22,12 20,20 17,23 H9 C7,20 5,16 5,11 C5,7 5,4 6,2 Z" fill="#9a9a9a"/><path d="M8,9 h4 M14,9 h4 M12,11 v6 M10,19 h5" stroke="#333" stroke-width="1.2"/><path d="M0,0 H7 C4,5 3,12 5,24 H0 Z" fill="#0a0a0a"/></svg>
<svg class="a" style="left:797px;top:736px" width="24" height="24" viewBox="0 0 24 24"><circle cx="12" cy="12" r="11.5" fill="#f39a25"/><circle cx="12" cy="12" r="5" fill="none" stroke="#fff" stroke-width="2.2"/><path d="M12,3.5 v17 M3.5,12 h17 M6,6 l12,12 M18,6 l-12,12" stroke="#fff" stroke-width="1.8"/><circle cx="12" cy="12" r="2.5" fill="#f39a25"/></svg>
<div class="a" style="left:838px;top:766px;width:40px;height:2px;background:#2c7fc7"></div>
<svg class="a" style="left:846px;top:736px" width="24" height="24" viewBox="0 0 24 24"><rect width="24" height="24" fill="#050505"/><path d="M7.5,3 H10.5 L13.5,13 V3 H16.5 V21 L13.5,20.5 10.5,11 V20.5 L7.5,21 Z" fill="#e50914"/></svg>
<div class="a" style="left:887px;top:766px;width:40px;height:2px;background:#2c7fc7"></div>
<svg class="a" style="left:895px;top:736px" width="24" height="24" viewBox="0 0 24 24"><path d="M12,12 L2.5,6.5 A11,11 0 0 1 21.5,6.5 Z" fill="#db4437"/><path d="M12,12 L21.5,6.5 A11,11 0 0 1 12,23 Z" fill="#f4c20d"/><path d="M12,12 L12,23 A11,11 0 0 1 2.5,6.5 Z" fill="#0f9d58"/><circle cx="12" cy="12" r="5.2" fill="#fff"/><circle cx="12" cy="12" r="4" fill="#4285f4"/></svg>
<svg class="a" style="left:1102px;top:742px" width="14" height="10" viewBox="0 0 14 10"><path d="M1,8 L7,2 13,8" fill="none" stroke="#111" stroke-width="1.4"/></svg>
<svg class="a" style="left:1124px;top:741px" width="18" height="14" viewBox="0 0 18 14"><path d="M1,4 h4 M1,8 h4 M5,2 v8" stroke="#111" stroke-width="1.3"/><rect x="6" y="3" width="10.5" height="8" fill="#111"/><rect x="16.5" y="5.5" width="1.3" height="3" fill="#111"/><rect x="8" y="5" width="6.5" height="4" fill="#e4d8d8"/><rect x="8" y="5" width="4.5" height="4" fill="#111"/></svg>
<svg class="a" style="left:1148px;top:739px" width="19" height="19" viewBox="0 0 19 19"><path d="M3,13 C0.5,13 0.5,8.5 3.5,8.5 C4,5 8,3.5 10.5,5.5 C12.5,4 16,5.5 15.5,8.5" fill="none" stroke="#111" stroke-width="1.5"/><path d="M3,13 h6" stroke="#111" stroke-width="1.5"/><circle cx="13.5" cy="13.5" r="5" fill="#e81123"/><path d="M11,13.5 h5" stroke="#fff" stroke-width="1.5"/></svg>
<svg class="a" style="left:1175px;top:740px" width="15" height="15" viewBox="0 0 15 15"><path d="M1.5,10 A10,10 0 0 1 11,2 M3.5,12 A7,7 0 0 1 11,5.5 M6,13.5 A4,4 0 0 1 11,9" fill="none" stroke="#111" stroke-width="1.2"/><circle cx="12" cy="12.5" r="1.6" fill="#111"/></svg>
<svg class="a" style="left:1196px;top:739px" width="18" height="17" viewBox="0 0 18 17"><path d="M1,6 H4 L8.5,2 V15 L4,11 H1 Z" fill="none" stroke="#111" stroke-width="1.2" stroke-linejoin="round"/><path d="M11,5.5 a4,4 0 0 1 0,6 M13.5,3.5 a7,7 0 0 1 0,10 M16,2 a9,9 0 0 1 0,13" fill="none" stroke="#111" stroke-width="1"/></svg>
<div class="a" style="left:1226px;top:741px;font-size:12.6px;line-height:14px;color:#111;transform:scaleX(.76);transform-origin:0 0">CES</div>
<div class="a" style="left:1272px;top:732px;font-size:12.6px;line-height:14px;color:#111;transform:scaleX(.88);transform-origin:0 0">8:38</div>
<div class="a" style="left:1256.5px;top:750px;font-size:12.6px;line-height:14px;color:#111;transform:scaleX(.86);transform-origin:0 0">24.11.2020</div>
<svg class="a" style="left:1325px;top:740px" width="25" height="23" viewBox="0 0 25 23"><path d="M1,1 H19 V13 H7 L3,17 V13 H1 Z" fill="#111"/><path d="M4,4.5 h12 M4,7.5 h12 M4,10.5 h8" stroke="#e4d8d8" stroke-width="1.1"/><circle cx="16" cy="15" r="7.3" fill="#e4d8d8" stroke="#333" stroke-width="1.1"/><text x="16" y="19.3" text-anchor="middle" font-size="12" font-family="Liberation Sans" fill="#111">2</text></svg>
<div class="a" style="left:1361px;top:729px;width:1px;height:39px;background:#b8b0b0"></div>
</body></html>
